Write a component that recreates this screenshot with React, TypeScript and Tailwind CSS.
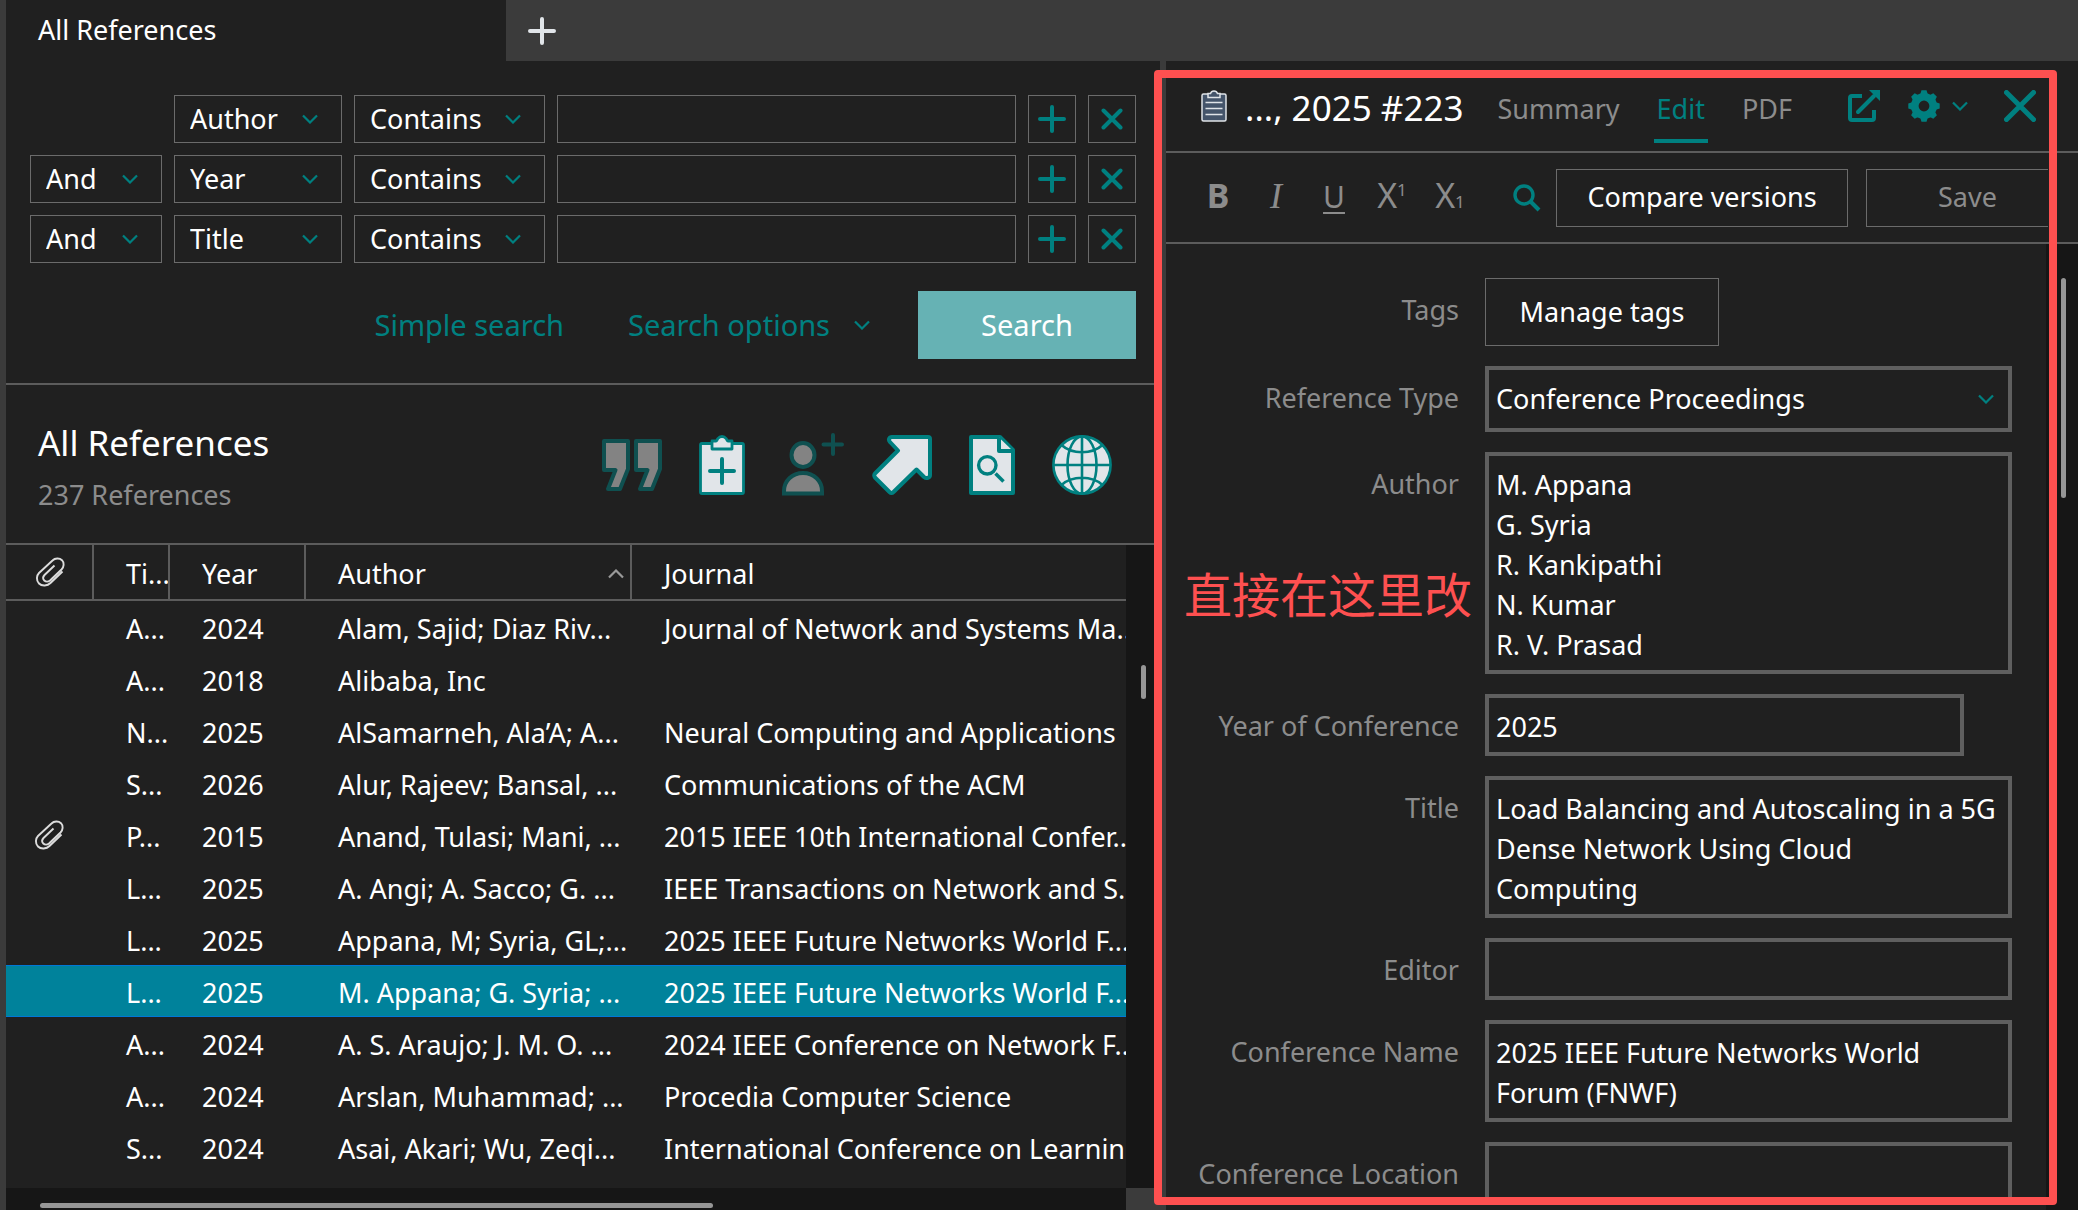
import React from "react";

type IconProps = { className?: string };

function Chevron({ className = "" }: IconProps) {
  return (
    <svg viewBox="0 0 16 10" className={`h-[10px] w-4 ${className}`} fill="none" aria-hidden="true">
      <path d="M1 1.5 8 8.5 15 1.5" stroke="currentColor" strokeWidth="2.2" />
    </svg>
  );
}

function PlusIcon({ className = "" }: IconProps) {
  return (
    <svg viewBox="0 0 28 28" className={`size-7 ${className}`} fill="none" aria-hidden="true">
      <path d="M14 2V26M2 14H26" stroke="currentColor" strokeWidth="4" strokeLinecap="round" />
    </svg>
  );
}

function CrossIcon({ className = "" }: IconProps) {
  return (
    <svg viewBox="0 0 22 22" className={`size-[22px] ${className}`} fill="none" aria-hidden="true">
      <path d="M2.5 2.5 19.5 19.5M19.5 2.5 2.5 19.5" stroke="currentColor" strokeWidth="4" strokeLinecap="round" />
    </svg>
  );
}

function PaperclipIcon() {
  return (
    <svg viewBox="0 0 30 30" className="size-[30px]" fill="none" stroke="#dcdcdc" strokeWidth="1.9" aria-hidden="true">
      <path d="M27.5 14.5 15.5 26C12.500 29 7 29.500 4 26.500C1 23.500 1.500 18.500 4 16L17.500 3.500C20 1 24.500 .8 27 3.200C29.500 5.800 29 9.800 26.500 12.500L15 23.500C13.300 25 10.800 25 9.300 23.500C7.800 22 7.900 19.800 9.500 18L19.500 8.500" />
    </svg>
  );
}

function QuoteIcon() {
  return (
    <svg viewBox="0 0 60 60" className="size-[60px]" fill="#838383" stroke="#0f5050" strokeWidth="4" strokeLinejoin="round" aria-hidden="true">
      <path d="M2 6H26V34L18 54H6L13.500 35H2Z" />
      <path d="M34 6H58V34L50 54H38L45.500 35H34Z" />
    </svg>
  );
}

function ClipboardPlusIcon() {
  return (
    <svg viewBox="0 0 60 60" className="size-[60px]" fill="#e1e5e9" stroke="#008080" strokeLinejoin="round" aria-hidden="true">
      <rect x="8.500" y="8.500" width="43" height="50" rx="1.500" strokeWidth="2.800" />
      <path d="M20 14H40V6H36C35 6 35 4.500 34 3.500C32 .8 28 .8 26 3.500C25 4.500 25 6 24 6H20Z" strokeWidth="2.800" />
      <path d="M30 24V48M18 36H42" strokeWidth="4" strokeLinecap="round" />
    </svg>
  );
}

function UserPlusIcon() {
  return (
    <svg viewBox="0 0 60 60" className="size-[60px] overflow-visible" fill="#838383" stroke="#0f5050" strokeWidth="4" aria-hidden="true">
      <ellipse cx="21" cy="20" rx="11.500" ry="12" />
      <path d="M2 58.500V56C2 46 10 38 21 38S40 46 40 56V58.500Z" />
      <path d="M51 0V19M41.500 9.500H60" strokeLinecap="round" />
    </svg>
  );
}

function ArrowIcon() {
  return (
    <svg viewBox="0 0 60 60" className="size-[60px]" fill="#e1e5e9" stroke="#008080" strokeWidth="4" strokeLinejoin="round" aria-hidden="true">
      <path d="M56 2H20C17 2 16 5 18 7L26 15.500 3 38.500Q1.500 40.500 3 42.500L17.500 57Q19.500 59 21.500 57L44.500 34.500 52 42C54.500 44 58 43 58 40V4Q58 2 56 2Z" />
    </svg>
  );
}

function FindDocumentIcon() {
  return (
    <svg viewBox="0 0 60 60" className="size-[60px]" fill="#e1e5e9" stroke="#008080" strokeWidth="4" strokeLinejoin="round" aria-hidden="true">
      <path d="M9 2H38L51 15V58H9Z" />
      <path d="M37 2.500V16H51" />
      <circle cx="25.300" cy="30.300" r="8.700" strokeWidth="3.400" />
      <path d="M33.500 38.500 41.500 46.500" strokeWidth="3.600" />
    </svg>
  );
}

function GlobeIcon() {
  return (
    <svg viewBox="0 0 60 60" className="size-[60px]" fill="none" stroke="#008080" strokeWidth="2.600" aria-hidden="true">
      <circle cx="30" cy="30" r="28.600" fill="#e1e5e9" />
      <ellipse cx="30" cy="30" rx="14.500" ry="28.600" />
      <path d="M30 1.500V58.500M1.500 30H58.500M9.500 10C20 19.600 40 19.600 50.500 10M9.500 50C20 40.400 40 40.400 50.500 50" />
    </svg>
  );
}

function ReferenceIcon() {
  return (
    <svg viewBox="0 0 26 32" className="h-8 w-[26px]" fill="#44546a" stroke="#dfe3e8" aria-hidden="true">
      <rect x="1" y="4" width="24" height="27" rx="1.500" strokeWidth="1.500" />
      <path d="M7 7.500H19V3.500H16.500C15.500 .3 10.500 .3 9.500 3.500H7Z" strokeWidth="1.500" />
      <path d="M4.500 12.500H21.500M4.500 18.500H21.500M4.500 24.500H21.500" strokeWidth="1.600" />
    </svg>
  );
}

function OpenExternalIcon() {
  return (
    <svg viewBox="0 0 32 32" className="size-8" fill="none" stroke="#008080" strokeWidth="4" aria-hidden="true">
      <path d="M14 6H4Q2 6 2 8V28Q2 30 4 30H24Q26 30 26 28V20" />
      <path d="M10 22 26 6" strokeLinecap="round" />
      <path d="M21 0H32V11Z" fill="#008080" stroke="none" />
    </svg>
  );
}

function GearIcon() {
  return (
    <svg viewBox="0 0 32 32" className="size-8" fill="none" stroke="#008080" aria-hidden="true">
      <circle cx="16" cy="16" r="9.200" strokeWidth="7.600" />
      {[0, 45, 90, 135, 180, 225, 270, 315].map((angle) => (
        <path key={angle} d="M12 5 13.500 .3H18.500L20 5Z" fill="#008080" stroke="none" transform={`rotate(${angle} 16 16)`} />
      ))}
    </svg>
  );
}

function SearchIcon() {
  return (
    <svg viewBox="0 0 28 28" className="size-7" fill="none" stroke="#008080" strokeWidth="3.4" aria-hidden="true">
      <circle cx="11" cy="11" r="9" />
      <path d="M17.500 17.500 26 26" strokeWidth="4" />
    </svg>
  );
}

const selectClass =
  "h-12 w-full appearance-none border border-[#6b6b6b] bg-[#202020] pl-[15px] text-white outline-none";

function FilterSelect({ label, value, options }: { label: string; value: string; options: string[] }) {
  return (
    <div className="relative">
      <select aria-label={label} defaultValue={value} className={selectClass}>
        {options.map((o) => (
          <option key={o}>{o}</option>
        ))}
      </select>
      <Chevron className="pointer-events-none absolute top-[19px] right-6 text-[#008080]" />
    </div>
  );
}

const filters = ["Author", "Year", "Title"];

function SearchPanel() {
  return (
    <section className="border-b-2 border-[#5c5c5c] pt-[34px] pr-6 pb-6 pl-6">
      <div className="grid gap-3">
        {filters.map((field, i) => (
          <div key={field} className="grid grid-cols-[132px_168px_191px_1fr_48px_48px] gap-3">
            {i === 0 ? <span /> : <FilterSelect label={`Operator ${i + 1}`} value="And" options={["And", "Or", "Not"]} />}
            <FilterSelect label={`Field ${i + 1}`} value={field} options={filters} />
            <FilterSelect label={`Condition ${i + 1}`} value="Contains" options={["Contains", "Is"]} />
            <input aria-label={`Search text ${i + 1}`} className="h-12 w-full min-w-0 border border-[#6b6b6b] bg-transparent px-3 outline-none" />
            <button aria-label="Add row" className="flex h-12 items-center justify-center border border-[#6b6b6b] text-[#008080]">
              <PlusIcon />
            </button>
            <button aria-label="Remove row" className="flex h-12 items-center justify-center border border-[#6b6b6b] text-[#008080]">
              <CrossIcon />
            </button>
          </div>
        ))}
      </div>
      <div className="mt-7 flex items-center justify-end text-[29px] text-[#008080]">
        <button className="mr-16">Simple search</button>
        <button className="mr-12 flex items-center gap-6">
          Search options
          <Chevron />
        </button>
        <button className="h-[68px] w-[218px] bg-[#66b2b4] text-white">Search</button>
      </div>
    </section>
  );
}

const actions: [string, () => React.JSX.Element][] = [
  ["Insert citation", QuoteIcon],
  ["New reference", ClipboardPlusIcon],
  ["Share group", UserPlusIcon],
  ["Export", ArrowIcon],
  ["Find full text", FindDocumentIcon],
  ["Web search", GlobeIcon],
];

const rows: [boolean, string, string, string, string][] = [
  [false, "A...", "2024", "Alam, Sajid; Diaz Riv...", "Journal of Network and Systems Ma..."],
  [false, "A...", "2018", "Alibaba, Inc", ""],
  [false, "N...", "2025", "AlSamarneh, Ala’A; A...", "Neural Computing and Applications"],
  [false, "S...", "2026", "Alur, Rajeev; Bansal, ...", "Communications of the ACM"],
  [true, "P...", "2015", "Anand, Tulasi; Mani, ...", "2015 IEEE 10th International Confer..."],
  [false, "L...", "2025", "A. Angi; A. Sacco; G. ...", "IEEE Transactions on Network and S..."],
  [false, "L...", "2025", "Appana, M; Syria, GL;...", "2025 IEEE Future Networks World F..."],
  [false, "L...", "2025", "M. Appana; G. Syria; ...", "2025 IEEE Future Networks World F..."],
  [false, "A...", "2024", "A. S. Araujo; J. M. O. ...", "2024 IEEE Conference on Network F..."],
  [false, "A...", "2024", "Arslan, Muhammad; ...", "Procedia Computer Science"],
  [false, "S...", "2024", "Asai, Akari; Wu, Zeqi...", "International Conference on Learnin..."],
];

const SELECTED = 7;

function ReferenceTable() {
  const head = "overflow-hidden border-r-2 border-[#5c5c5c] p-0 text-left font-normal whitespace-nowrap";
  const cell = "overflow-hidden p-0 pt-1 pl-8 whitespace-nowrap";
  return (
    <div className="flex min-h-0 flex-1">
      <div className="flex min-w-0 flex-1 flex-col">
        <div className="min-h-0 flex-1 overflow-hidden">
          <table className="w-full table-fixed border-separate border-spacing-0">
            <colgroup>
              <col className="w-[88px]" />
              <col className="w-[76px]" />
              <col className="w-[136px]" />
              <col className="w-[326px]" />
              <col />
            </colgroup>
            <thead>
              <tr className="h-14 [&>th]:border-b-2 [&>th]:border-b-[#5c5c5c]">
                <th className={`${head} pl-[29px]`} aria-label="Attachment">
                  <PaperclipIcon />
                </th>
                <th className={`${head} pt-1 pl-8`}>Ti...</th>
                <th className={`${head} pt-1 pl-8`}>Year</th>
                <th className={`${head} pt-1 pl-8`}>
                  <span className="flex items-center justify-between pr-[6px]">
                    Author
                    <Chevron className="rotate-180 text-[#999999]" />
                  </span>
                </th>
                <th className="overflow-hidden p-0 pt-1 pl-8 text-left font-normal">Journal</th>
              </tr>
            </thead>
            <tbody>
              {rows.map(([clip, title, year, author, journal], i) => (
                <tr
                  key={i}
                  className={
                    i === SELECTED
                      ? "h-[52px] bg-[#00829b] [&>td]:border-y [&>td]:border-[#0078d7]"
                      : "h-[52px]"
                  }
                >
                  <td className="p-0 pl-7">{clip && <PaperclipIcon />}</td>
                  <td className={cell}>{title}</td>
                  <td className={cell}>{year}</td>
                  <td className={cell}>{author}</td>
                  <td className={cell}>{journal}</td>
                </tr>
              ))}
            </tbody>
          </table>
        </div>
        <div className="h-[22px] shrink-0 bg-[#161616] pt-[15px] pl-[34px]">
          <div className="h-[5px] w-[62%] rounded-full bg-[#969696]" />
        </div>
      </div>
      <div className="flex w-[34px] shrink-0 flex-col">
        <div className="flex-1 bg-[#161616] pt-[120px] pl-[15px]">
          <div className="h-[34px] w-[5px] rounded-full bg-[#969696]" />
        </div>
        <div className="h-[22px] bg-[#3b3b3b]" />
      </div>
    </div>
  );
}

function LibraryPane() {
  return (
    <main className="flex min-h-0 min-w-0 flex-[1154] flex-col">
      <SearchPanel />
      <header className="flex items-start justify-between border-b-2 border-[#5c5c5c] pt-[34px] pr-12 pb-7 pl-8">
        <div>
          <h1 className="text-[35px] leading-[48px]">All References</h1>
          <p className="pt-2 leading-10 text-[#8c8c8c]">237 References</p>
        </div>
        <div className="flex gap-[30px] pt-4">
          {actions.map(([label, Icon]) => (
            <button key={label} aria-label={label}>
              <Icon />
            </button>
          ))}
        </div>
      </header>
      <ReferenceTable />
    </main>
  );
}

function Field({ id, label, children }: { id: string; label: string; children: React.ReactNode }) {
  return (
    <div className="flex gap-[26px]">
      <label htmlFor={id} className="w-[293px] shrink-0 pt-3 text-right leading-10 text-[#8c8c8c]">
        {label}
      </label>
      <div className="min-w-0 flex-1">{children}</div>
    </div>
  );
}

const boxClass = "block w-full resize-none overflow-hidden border-4 border-[#5f5f5f] bg-transparent pl-[7px] leading-10 outline-none";

function TextField({ id, label, value = "", rows = 1, className = "" }: { id: string; label: string; value?: string; rows?: number; className?: string }) {
  return (
    <Field id={id} label={label}>
      <div className={className}>
        <textarea id={id} rows={rows} defaultValue={value} className={`${boxClass} pt-[9px] pr-[10px] pb-[5px]`} />
      </div>
    </Field>
  );
}

function EditForm() {
  return (
    <div className="flex min-h-0 flex-1 overflow-hidden border-t-2 border-[#5c5c5c]">
      <form className="grid min-w-0 flex-1 content-start gap-5 pt-[34px] pr-[34px]">
        <Field id="tags" label="Tags">
          <button id="tags" type="button" className="h-[68px] w-[234px] border border-[#6b6b6b]">
            Manage tags
          </button>
        </Field>
        <Field id="type" label="Reference Type">
          <div className="relative">
            <select id="type" className={`${boxClass} h-[66px] appearance-none`}>
              <option>Conference Proceedings</option>
            </select>
            <Chevron className="pointer-events-none absolute top-[28px] right-[18px] text-[#008080]" />
          </div>
        </Field>
        <TextField id="author" label="Author" rows={5} value={"M. Appana\nG. Syria\nR. Kankipathi\nN. Kumar\nR. V. Prasad"} />
        <TextField id="year" label="Year of Conference" value="2025" className="pr-12" />
        <TextField id="title" label="Title" rows={3} value="Load Balancing and Autoscaling in a 5G Dense Network Using Cloud Computing" />
        <TextField id="editor" label="Editor" />
        <TextField id="conference" label="Conference Name" rows={2} value="2025 IEEE Future Networks World Forum (FNWF)" />
        <TextField id="location" label="Conference Location" />
      </form>
      <div className="w-8 shrink-0 bg-[#161616] pt-[34px] pl-[15px]">
        <div className="h-[220px] w-[5px] rounded-full bg-[#969696]" />
      </div>
    </div>
  );
}

function DetailPane() {
  const format = "w-[50px] whitespace-nowrap";
  return (
    <aside className="flex min-h-0 min-w-0 flex-[912] flex-col border-l-[6px] border-[#3b3b3b]">
      <header className="flex h-[90px] shrink-0 items-start pt-[29px] pr-[42px] pl-[35px] text-[#8c8c8c]">
        <ReferenceIcon />
        <h2 className="-mt-1.5 ml-[18px] text-[35px] leading-[48px] whitespace-nowrap text-white">..., 2025 #223</h2>
        <nav className="ml-auto flex gap-[34px] leading-[38px]">
          <button className="-mt-px h-[54px] self-start pb-[14px]">Summary</button>
          <button className="-mt-px h-[54px] self-start border-b-4 border-[#008080] px-[3px] pb-[10px] text-[#008080]">Edit</button>
          <button className="-mt-px h-[54px] self-start pb-[14px]">PDF</button>
        </nav>
        <button aria-label="Open in new window" className="ml-14">
          <OpenExternalIcon />
        </button>
        <button aria-label="Settings" className="ml-7 flex items-center gap-3 text-[#008080]">
          <GearIcon />
          <Chevron />
        </button>
        <button aria-label="Close" className="ml-9 text-[#008080]">
          <svg viewBox="0 0 32 32" className="size-8" fill="none" aria-hidden="true">
            <path d="M2.500 2.500 29.500 29.500M29.500 2.500 2.500 29.500" stroke="currentColor" strokeWidth="5" strokeLinecap="round" />
          </svg>
        </button>
      </header>
      <div className="flex h-[91px] shrink-0 items-center border-t-2 border-[#5c5c5c] pr-[30px] pl-[27px] text-[#8c8c8c]">
        <div className="flex items-baseline gap-2 pb-1 text-[34px] leading-10">
          <button aria-label="Bold" className={`${format} font-bold`}>B</button>
          <button aria-label="Italic" className={`${format} font-['Liberation_Serif',serif] text-[36px] italic`}>I</button>
          <button aria-label="Underline" className={`${format} text-[30px] underline decoration-2 underline-offset-4`}>U</button>
          <button aria-label="Superscript" className={format}>
            X<span className="align-[12px] text-[17px] leading-none">1</span>
          </button>
          <button aria-label="Subscript" className={format}>
            X<span className="text-[17px] leading-none">1</span>
          </button>
        </div>
        <button aria-label="Find" className="mr-[15px] ml-auto">
          <SearchIcon />
        </button>
        <button className="h-[58px] w-[292px] border border-[#6b6b6b] text-white">Compare versions</button>
        <button className="ml-[18px] h-[58px] w-[182px] border border-r-0 border-[#6b6b6b] pl-5">Save</button>
      </div>
      <EditForm />
    </aside>
  );
}

export default function App() {
  return (
    <div className="relative flex h-screen flex-col overflow-hidden border-l-[6px] border-[#3b3b3b] bg-[#202020] font-['Noto_Sans','Noto_Sans_CJK_SC',sans-serif] text-[27px] text-white">
      <div className="flex h-[61px] shrink-0 bg-[#3b3b3b]">
        <button className="w-[500px] bg-[#202020] pl-8 text-left">All References</button>
        <button aria-label="New tab" className="ml-[22px] text-[#e1e5e9]">
          <PlusIcon />
        </button>
      </div>
      <div className="flex min-h-0 flex-1">
        <LibraryPane />
        <DetailPane />
      </div>
      <div className="pointer-events-none absolute top-[70px] right-[21px] bottom-[5px] w-[903px] rounded border-8 border-[#fe5050]">
        <p className="absolute top-[479px] left-[22px] font-['Noto_Sans_CJK_SC',sans-serif] text-[48px] leading-[70px] whitespace-nowrap text-[#fe5050]">
          直接在这里改
        </p>
      </div>
    </div>
  );
}
